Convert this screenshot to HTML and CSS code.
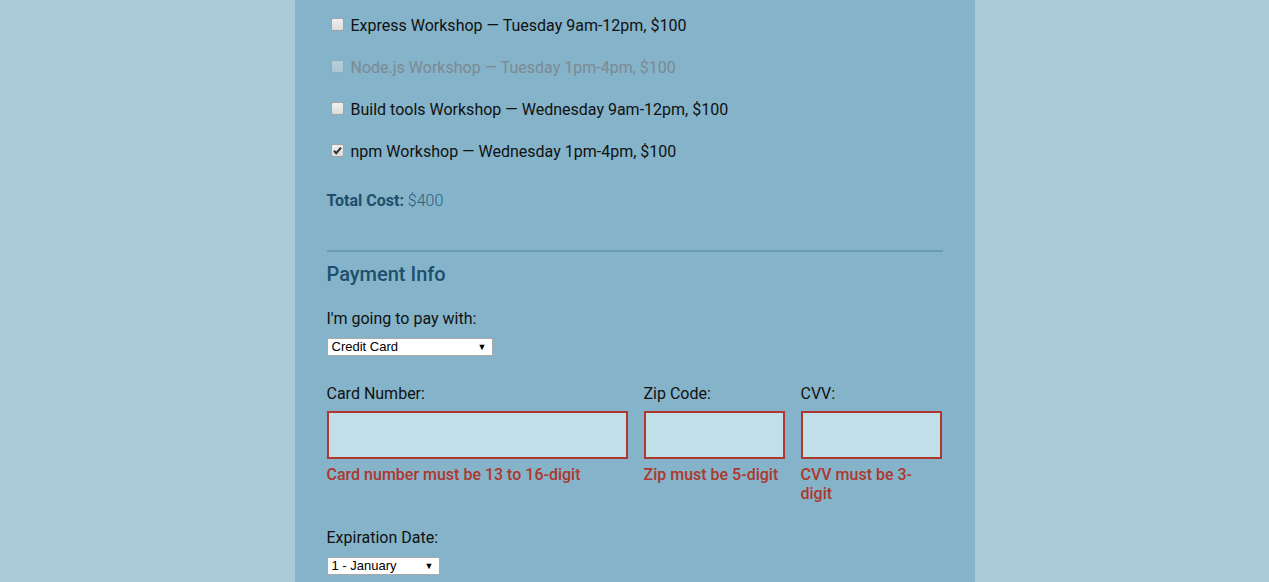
FILE: index.html
```html
<!DOCTYPE html>
<html lang="en">
<head>
<meta charset="utf-8">
<title>Register</title>
<link rel="stylesheet" href="styles.css">
</head>
<body>
<div class="page">
  <form class="form">
    <fieldset class="activities">
      <label class="activity"><span class="box"></span>Express Workshop — Tuesday 9am-12pm, $100</label>
      <label class="activity disabled"><span class="box"></span>Node.js Workshop — Tuesday 1pm-4pm, $100</label>
      <label class="activity"><span class="box"></span>Build tools Workshop — Wednesday 9am-12pm, $100</label>
      <label class="activity"><span class="box checked"><svg viewBox="0 0 13 13" width="13" height="13"><path d="M3 6.8 L5.2 9.2 L10 3.6" fill="none" stroke="#333" stroke-width="2.2"/></svg></span>npm Workshop — Wednesday 1pm-4pm, $100</label>
    </fieldset>
    <p class="total"><strong>Total Cost:</strong> $400</p>

    <fieldset class="payment">
      <h2 class="legend">Payment Info</h2>
      <label class="field-label">I'm going to pay with:</label>
      <div class="select select-payment"><span>Credit Card</span><span class="arrow">▼</span></div>

      <div class="card-row">
        <div class="col col-card">
          <label class="field-label">Card Number:</label>
          <div class="input"></div>
          <p class="error">Card number must be 13 to 16-digit</p>
        </div>
        <div class="col col-small">
          <label class="field-label">Zip Code:</label>
          <div class="input"></div>
          <p class="error">Zip must be 5-digit</p>
        </div>
        <div class="col col-small">
          <label class="field-label">CVV:</label>
          <div class="input"></div>
          <p class="error">CVV must be 3-digit</p>
        </div>
      </div>

      <label class="field-label exp-label">Expiration Date:</label>
      <div class="select select-month"><span>1 - January</span><span class="arrow">▼</span></div>
    </fieldset>
  </form>
</div>
</body>
</html>
```
FILE: styles.css
```css
html, body {
  margin: 0;
  padding: 0;
  height: 100%;
}
body {
  background: #aacbd8;
  font-family: Roboto, "Liberation Sans", sans-serif;
  font-size: 16px;
  color: #111;
  overflow: hidden;
}
.page {
  width: 680px;
  margin: 0 auto;
  min-height: 100%;
  background: #84b3ca;
  box-sizing: border-box;
  padding: 17px 32px 0;
}
.form {
  display: flex;
  flex-direction: column;
}
fieldset {
  border: 0;
  margin: 0;
  padding: 0;
}
.activities {
  display: flex;
  flex-direction: column;
  gap: 24px;
}
.activity {
  display: flex;
  align-items: center;
  line-height: 18px;
  height: 18px;
}
.box {
  width: 11px;
  height: 11px;
  border: 1px solid #a3a3a3;
  border-radius: 2px;
  background: linear-gradient(#f0f0f0, #dcdcdc);
  margin: 0 7px 0 4px;
  position: relative;
  top: -2px;
  flex: none;
}
.box svg {
  position: absolute;
  left: -1px;
  top: -1px;
}
.disabled {
  color: #7d8a91;
}
.disabled .box {
  opacity: 0.45;
}
.total {
  margin: 31px 0 0;
  line-height: 18px;
  color: #2f607c;
  font-weight: 300;
}
.total strong {
  font-weight: 700;
  color: #1e4f6a;
}
.payment {
  margin-top: 40px;
  border-top: 2px solid #6a9cb5;
  display: flex;
  flex-direction: column;
  align-items: flex-start;
}
.legend {
  margin: 10px 0 0;
  font-size: 20px;
  font-weight: 500;
  line-height: 24px;
  color: #1e4f6a;
}
.field-label {
  display: block;
  line-height: 18px;
}
.legend + .field-label {
  margin-top: 24px;
}
.select {
  margin-top: 10px;
  height: 18px;
  box-sizing: border-box;
  border: 1px solid #a9a9a9;
  background: #fff;
  display: flex;
  align-items: center;
  justify-content: space-between;
  padding: 0 5px 1px 4px;
  font-family: "Liberation Sans", Arial, sans-serif;
  font-size: 13px;
  color: #000;
}
.arrow {
  font-size: 9px;
}
.select-payment {
  width: 166px;
}
.select-month {
  width: 113px;
}
.card-row {
  margin-top: 29px;
  display: flex;
  gap: 16px;
  width: 616px;
}
.col-card {
  width: 301px;
}
.col-small {
  width: 141px;
}
.input {
  margin-top: 8px;
  height: 48px;
  box-sizing: border-box;
  border: 2px solid #b0372b;
  background: #c1dfe8;
}
.error {
  margin: 6px 0 0;
  line-height: 19px;
  color: #b0372b;
  font-weight: 500;
}
.card-row + .exp-label {
  margin-top: 26px;
}
```
